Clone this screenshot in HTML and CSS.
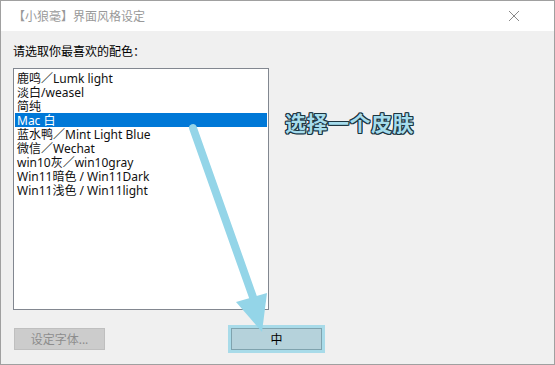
FILE: index.html
```html
<!DOCTYPE html>
<html lang="zh-CN">
<head>
  <meta charset="UTF-8">
  <title>【小狼毫】界面风格设定</title>
  <link rel="stylesheet" href="styles.css">
</head>
<body>
  <div class="window">
    <div class="titlebar">
      <span class="title">【小狼毫】界面风格设定</span>
      <svg class="close" width="12" height="12" viewBox="0 0 12 12">
        <path d="M1 1 L11 11 M11 1 L1 11" stroke="#8a8a8a" stroke-width="1" fill="none"/>
      </svg>
    </div>
    <div class="content">
      <div class="label">请选取你最喜欢的配色：</div>
      <ul class="listbox">
        <li>鹿鸣／Lumk light</li>
        <li>淡白/weasel</li>
        <li>简纯</li>
        <li class="selected">Mac 白</li>
        <li>蓝水鸭／Mint Light Blue</li>
        <li>微信／Wechat</li>
        <li>win10灰／win10gray</li>
        <li>Win11暗色 / Win11Dark</li>
        <li>Win11浅色 / Win11light</li>
      </ul>
      <div class="buttons">
        <button class="btn disabled">设定字体...</button>
        <button class="btn ok">中</button>
      </div>
    </div>

    <!-- annotation overlay -->
    <div class="callout">选择一个皮肤</div>
    <svg class="arrow" width="555" height="365" viewBox="0 0 555 365">
      <line x1="193" y1="128" x2="254" y2="300" stroke="#94d5e8" stroke-width="8" stroke-linecap="round"/>
      <polygon points="236,302 267,293 262,332" fill="#94d5e8"/>
    </svg>
  </div>
</body>
</html>
```

FILE: styles.css
```css
body {
  margin: 0;
  font-family: "Noto Sans", "Noto Sans CJK SC", sans-serif;
  font-size: 12px;
  color: #000;
}
.window {
  position: relative;
  width: 555px;
  height: 365px;
  box-sizing: border-box;
  border: 1px solid #a0a0a0;
  background: #f0f0f0;
  overflow: hidden;
}
.titlebar {
  height: 30px;
  background: #fff;
  display: flex;
  align-items: center;
  justify-content: space-between;
  padding: 0 34px 0 12px;
}
.title {
  color: #999;
  font-size: 12px;
}
.content {
  padding: 13px 0 0 12px;
}
.label {
  height: 14px;
  line-height: 16px;
  margin-bottom: 10px;
}
.listbox {
  list-style: none;
  margin: 0;
  width: 256px;
  height: 242px;
  box-sizing: border-box;
  border: 1px solid #828790;
  background: #fff;
  padding: 2px 1px 1px;
}
.listbox li {
  height: 14px;
  line-height: 15px;
  padding-left: 2px;
  color: #111;
  white-space: nowrap;
}
.listbox li.selected {
  background: #0078d7;
  color: #fff;
}
.buttons {
  display: flex;
  margin-top: 18px;
  padding-left: 1px;
}
.btn {
  width: 91px;
  height: 22px;
  box-sizing: border-box;
  font-family: inherit;
  font-size: 12px;
  padding: 0;
}
.btn.disabled {
  background: #cccccc;
  border: 1px solid #bfbfbf;
  color: #8d8d8d;
}
.btn.ok {
  margin-left: 126px;
  background: #b5d2db;
  border: 1px solid #7fa3ae;
  color: #000;
  box-shadow: 0 0 0 3px #a8dbe9;
}
.callout {
  position: absolute;
  left: 284px;
  top: 106px;
  font-size: 21px;
  font-weight: bold;
  color: #a6dcec;
  letter-spacing: 0.5px;
  text-shadow: 1px 0 0 #1c3540, -1px 0 0 #1c3540, 0 1px 0 #1c3540, 0 -1px 0 #1c3540,
    1px 1px 0 #1c3540, -1px -1px 0 #1c3540, 1px -1px 0 #1c3540, -1px 1px 0 #1c3540;
}
.arrow {
  position: absolute;
  left: -1px;
  top: -1px;
  pointer-events: none;
}
```
